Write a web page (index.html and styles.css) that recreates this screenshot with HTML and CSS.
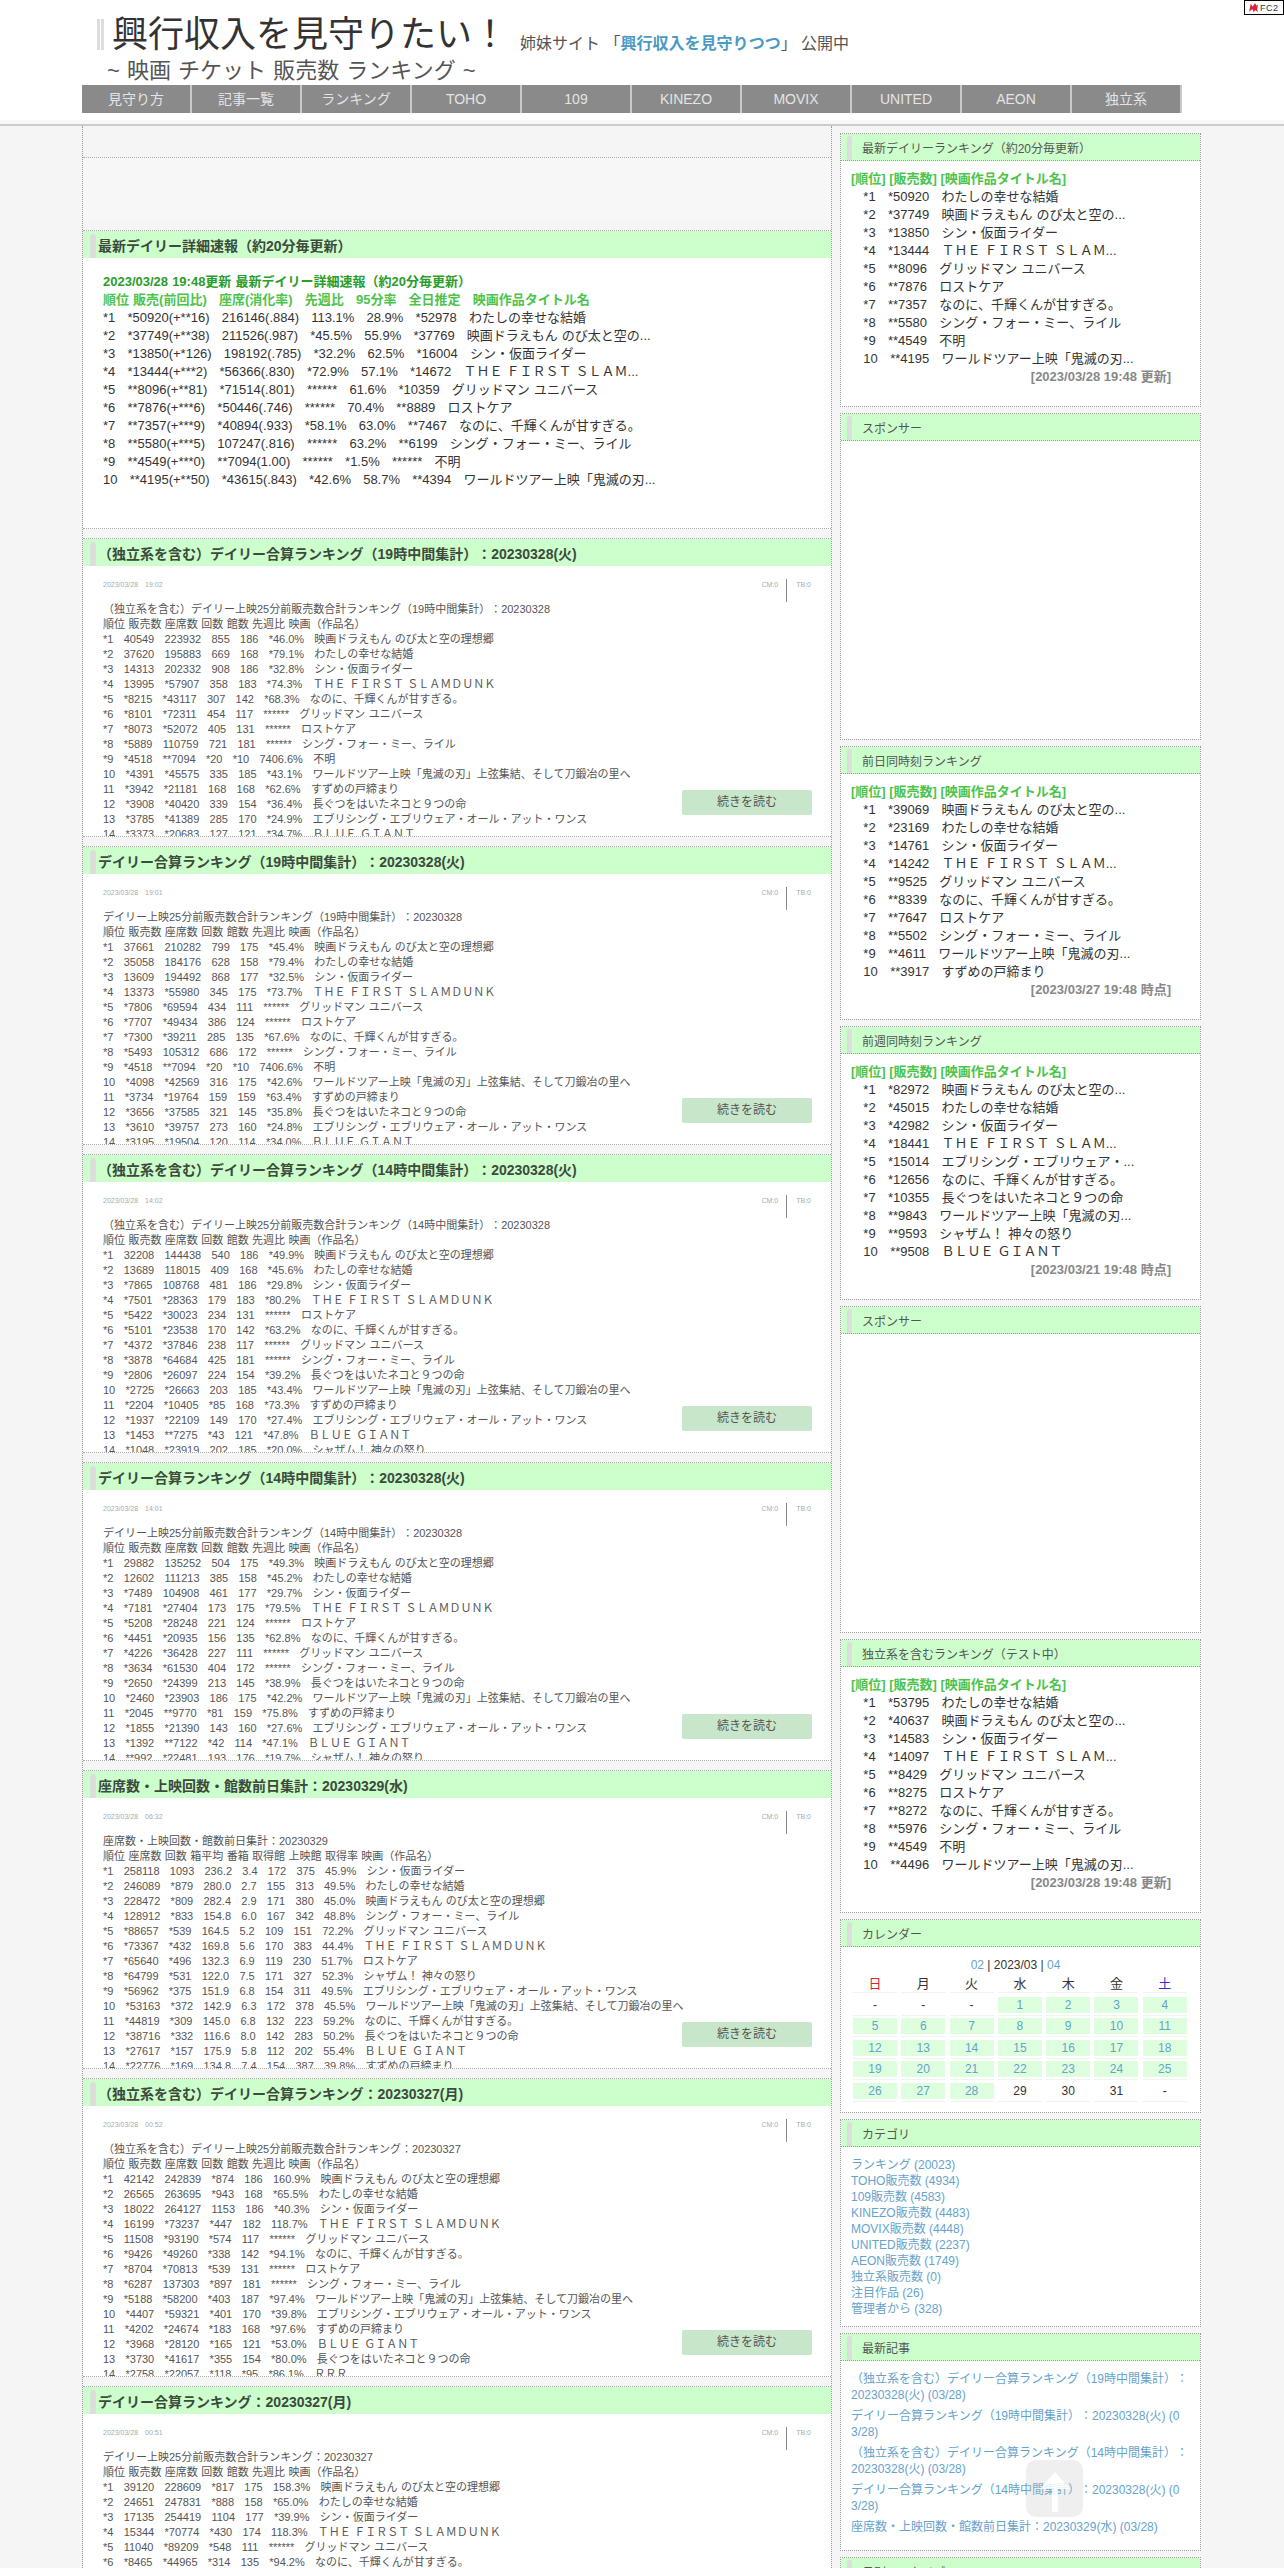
FILE: index.html
```html
<!DOCTYPE html>
<html lang="ja">
<head>
<meta charset="utf-8">
<title>興行収入を見守りたい！</title>
<link rel="stylesheet" href="styles.css">
</head>
<body>
<a class="fc2" href="#"><svg class="fc2-icon" viewBox="0 0 12 12" width="11" height="11"><path d="M1 11 L3 2 L5 5 L8 1 L9 4 L11 3 L10 8 L11 11 L8 9 L6 11 L5 8 L3 9 Z" fill="#d9263c"/></svg><span>FC2</span></a>
<header class="site-head">
  <div class="title-row">
    <span class="title-bar"></span>
    <h1 class="site-title">興行収入を見守りたい！</h1>
    <p class="sister">姉妹サイト 「<a class="sister-link" href="#">興行収入を見守りつつ</a>」 公開中</p>
  </div>
  <p class="site-sub">~ 映画 チケット 販売数 ランキング ~</p>
  <nav class="nav">
    <a href="#">見守り方</a><a href="#">記事一覧</a><a href="#">ランキング</a><a href="#">TOHO</a><a href="#">109</a><a href="#">KINEZO</a><a href="#">MOVIX</a><a href="#">UNITED</a><a href="#">AEON</a><a href="#">独立系</a>
  </nav>
</header>
<div class="band"></div>
<div class="layout">
<main class="main">
  <div class="ad-top"></div>

  <article class="entry">
    <h2 class="entry-head">最新デイリー詳細速報（約20分毎更新）</h2>
    <pre class="detail"><b class="hl-dark">2023/03/28 19:48更新 最新デイリー詳細速報（約20分毎更新）</b>
<b class="hl">順位 販売(前回比)   座席(消化率)   先週比   95分率   全日推定   映画作品タイトル名</b>
*1   *50920(+**16)   216146(.884)   113.1%   28.9%   *52978   わたしの幸せな結婚
*2   *37749(+**38)   211526(.987)   *45.5%   55.9%   *37769   映画ドラえもん のび太と空の...
*3   *13850(+*126)   198192(.785)   *32.2%   62.5%   *16004   シン・仮面ライダー
*4   *13444(+***2)   *56366(.830)   *72.9%   57.1%   *14672   ＴＨＥ ＦＩＲＳＴ ＳＬＡＭ...
*5   **8096(+**81)   *71514(.801)   ******   61.6%   *10359   グリッドマン ユニバース
*6   **7876(+***6)   *50446(.746)   ******   70.4%   **8889   ロストケア
*7   **7357(+***9)   *40894(.933)   *58.1%   63.0%   **7467   なのに、千輝くんが甘すぎる。
*8   **5580(+***5)   107247(.816)   ******   63.2%   **6199   シング・フォー・ミー、ライル
*9   **4549(+***0)   **7094(1.00)   ******   *1.5%   ******   不明
10   **4195(+**50)   *43615(.843)   *42.6%   58.7%   **4394   ワールドツアー上映「鬼滅の刃...</pre>
  </article>

  <article class="entry">
    <h2 class="entry-head">（独立系を含む）デイリー合算ランキング（19時中間集計）：20230328(火)</h2>
    <div class="entry-meta"><span>2023/03/28　19:02</span><span class="meta-right"><span class="meta-cm">CM:0</span><span>TB:0</span></span></div>
    <pre class="rank">（独立系を含む）デイリー上映25分前販売数合計ランキング（19時中間集計）：20230328
順位 販売数 座席数 回数 館数 先週比 映画（作品名）
*1   40549   223932   855   186   *46.0%   映画ドラえもん のび太と空の理想郷
*2   37620   195883   669   168   *79.1%   わたしの幸せな結婚
*3   14313   202332   908   186   *32.8%   シン・仮面ライダー
*4   13995   *57907   358   183   *74.3%   ＴＨＥ ＦＩＲＳＴ ＳＬＡＭＤＵＮＫ
*5   *8215   *43117   307   142   *68.3%   なのに、千輝くんが甘すぎる。
*6   *8101   *72311   454   117   ******   グリッドマン ユニバース
*7   *8073   *52072   405   131   ******   ロストケア
*8   *5889   110759   721   181   ******   シング・フォー・ミー、ライル
*9   *4518   **7094   *20   *10   7406.6%   不明
10   *4391   *45575   335   185   *43.1%   ワールドツアー上映「鬼滅の刃」上弦集結、そして刀鍛冶の里へ
11   *3942   *21181   168   168   *62.6%   すずめの戸締まり
12   *3908   *40420   339   154   *36.4%   長ぐつをはいたネコと９つの命
13   *3785   *41389   285   170   *24.9%   エブリシング・エブリウェア・オール・アット・ワンス
14   *3373   *20683   127   121   *34.7%   ＢＬＵＥ ＧＩＡＮＴ</pre>
    <a class="more" href="#">続きを読む</a>
  </article>

  <article class="entry">
    <h2 class="entry-head">デイリー合算ランキング（19時中間集計）：20230328(火)</h2>
    <div class="entry-meta"><span>2023/03/28　19:01</span><span class="meta-right"><span class="meta-cm">CM:0</span><span>TB:0</span></span></div>
    <pre class="rank">デイリー上映25分前販売数合計ランキング（19時中間集計）：20230328
順位 販売数 座席数 回数 館数 先週比 映画（作品名）
*1   37661   210282   799   175   *45.4%   映画ドラえもん のび太と空の理想郷
*2   35058   184176   628   158   *79.4%   わたしの幸せな結婚
*3   13609   194492   868   177   *32.5%   シン・仮面ライダー
*4   13373   *55980   345   175   *73.7%   ＴＨＥ ＦＩＲＳＴ ＳＬＡＭＤＵＮＫ
*5   *7806   *69594   434   111   ******   グリッドマン ユニバース
*6   *7707   *49434   386   124   ******   ロストケア
*7   *7300   *39211   285   135   *67.6%   なのに、千輝くんが甘すぎる。
*8   *5493   105312   686   172   ******   シング・フォー・ミー、ライル
*9   *4518   **7094   *20   *10   7406.6%   不明
10   *4098   *42569   316   175   *42.6%   ワールドツアー上映「鬼滅の刃」上弦集結、そして刀鍛冶の里へ
11   *3734   *19764   159   159   *63.4%   すずめの戸締まり
12   *3656   *37585   321   145   *35.8%   長ぐつをはいたネコと９つの命
13   *3610   *39757   273   160   *24.8%   エブリシング・エブリウェア・オール・アット・ワンス
14   *3195   *19504   120   114   *34.0%   ＢＬＵＥ ＧＩＡＮＴ</pre>
    <a class="more" href="#">続きを読む</a>
  </article>

  <article class="entry">
    <h2 class="entry-head">（独立系を含む）デイリー合算ランキング（14時中間集計）：20230328(火)</h2>
    <div class="entry-meta"><span>2023/03/28　14:02</span><span class="meta-right"><span class="meta-cm">CM:0</span><span>TB:0</span></span></div>
    <pre class="rank">（独立系を含む）デイリー上映25分前販売数合計ランキング（14時中間集計）：20230328
順位 販売数 座席数 回数 館数 先週比 映画（作品名）
*1   32208   144438   540   186   *49.9%   映画ドラえもん のび太と空の理想郷
*2   13689   118015   409   168   *45.6%   わたしの幸せな結婚
*3   *7865   108768   481   186   *29.8%   シン・仮面ライダー
*4   *7501   *28363   179   183   *80.2%   ＴＨＥ ＦＩＲＳＴ ＳＬＡＭＤＵＮＫ
*5   *5422   *30023   234   131   ******   ロストケア
*6   *5101   *23538   170   142   *63.2%   なのに、千輝くんが甘すぎる。
*7   *4372   *37846   238   117   ******   グリッドマン ユニバース
*8   *3878   *64684   425   181   ******   シング・フォー・ミー、ライル
*9   *2806   *26097   224   154   *39.2%   長ぐつをはいたネコと９つの命
10   *2725   *26663   203   185   *43.4%   ワールドツアー上映「鬼滅の刃」上弦集結、そして刀鍛冶の里へ
11   *2204   *10405   *85   168   *73.3%   すずめの戸締まり
12   *1937   *22109   149   170   *27.4%   エブリシング・エブリウェア・オール・アット・ワンス
13   *1453   **7275   *43   121   *47.8%   ＢＬＵＥ ＧＩＡＮＴ
14   *1048   *23919   202   185   *20.0%   シャザム！ 神々の怒り</pre>
    <a class="more" href="#">続きを読む</a>
  </article>

  <article class="entry">
    <h2 class="entry-head">デイリー合算ランキング（14時中間集計）：20230328(火)</h2>
    <div class="entry-meta"><span>2023/03/28　14:01</span><span class="meta-right"><span class="meta-cm">CM:0</span><span>TB:0</span></span></div>
    <pre class="rank">デイリー上映25分前販売数合計ランキング（14時中間集計）：20230328
順位 販売数 座席数 回数 館数 先週比 映画（作品名）
*1   29882   135252   504   175   *49.3%   映画ドラえもん のび太と空の理想郷
*2   12602   111213   385   158   *45.2%   わたしの幸せな結婚
*3   *7489   104908   461   177   *29.7%   シン・仮面ライダー
*4   *7181   *27404   173   175   *79.5%   ＴＨＥ ＦＩＲＳＴ ＳＬＡＭＤＵＮＫ
*5   *5208   *28248   221   124   ******   ロストケア
*6   *4451   *20935   156   135   *62.8%   なのに、千輝くんが甘すぎる。
*7   *4226   *36428   227   111   ******   グリッドマン ユニバース
*8   *3634   *61530   404   172   ******   シング・フォー・ミー、ライル
*9   *2650   *24399   213   145   *38.9%   長ぐつをはいたネコと９つの命
10   *2460   *23903   186   175   *42.2%   ワールドツアー上映「鬼滅の刃」上弦集結、そして刀鍛冶の里へ
11   *2045   **9770   *81   159   *75.8%   すずめの戸締まり
12   *1855   *21390   143   160   *27.6%   エブリシング・エブリウェア・オール・アット・ワンス
13   *1392   **7122   *42   114   *47.1%   ＢＬＵＥ ＧＩＡＮＴ
14   **992   *22481   193   176   *19.7%   シャザム！ 神々の怒り</pre>
    <a class="more" href="#">続きを読む</a>
  </article>

  <article class="entry">
    <h2 class="entry-head">座席数・上映回数・館数前日集計：20230329(水)</h2>
    <div class="entry-meta"><span>2023/03/28　06:32</span><span class="meta-right"><span class="meta-cm">CM:0</span><span>TB:0</span></span></div>
    <pre class="rank">座席数・上映回数・館数前日集計：20230329
順位 座席数 回数 箱平均 番箱 取得館 上映館 取得率 映画（作品名）
*1   258118   1093   236.2   3.4   172   375   45.9%   シン・仮面ライダー
*2   246089   *879   280.0   2.7   155   313   49.5%   わたしの幸せな結婚
*3   228472   *809   282.4   2.9   171   380   45.0%   映画ドラえもん のび太と空の理想郷
*4   128912   *833   154.8   6.0   167   342   48.8%   シング・フォー・ミー、ライル
*5   *88657   *539   164.5   5.2   109   151   72.2%   グリッドマン ユニバース
*6   *73367   *432   169.8   5.6   170   383   44.4%   ＴＨＥ ＦＩＲＳＴ ＳＬＡＭＤＵＮＫ
*7   *65640   *496   132.3   6.9   119   230   51.7%   ロストケア
*8   *64799   *531   122.0   7.5   171   327   52.3%   シャザム！ 神々の怒り
*9   *56962   *375   151.9   6.8   154   311   49.5%   エブリシング・エブリウェア・オール・アット・ワンス
10   *53163   *372   142.9   6.3   172   378   45.5%   ワールドツアー上映「鬼滅の刃」上弦集結、そして刀鍛冶の里へ
11   *44819   *309   145.0   6.8   132   223   59.2%   なのに、千輝くんが甘すぎる。
12   *38716   *332   116.6   8.0   142   283   50.2%   長ぐつをはいたネコと９つの命
13   *27617   *157   175.9   5.8   112   202   55.4%   ＢＬＵＥ ＧＩＡＮＴ
14   *22776   *169   134.8   7.4   154   387   39.8%   すずめの戸締まり</pre>
    <a class="more" href="#">続きを読む</a>
  </article>

  <article class="entry">
    <h2 class="entry-head">（独立系を含む）デイリー合算ランキング：20230327(月)</h2>
    <div class="entry-meta"><span>2023/03/28　00:52</span><span class="meta-right"><span class="meta-cm">CM:0</span><span>TB:0</span></span></div>
    <pre class="rank">（独立系を含む）デイリー上映25分前販売数合計ランキング：20230327
順位 販売数 座席数 回数 館数 先週比 映画（作品名）
*1   42142   242839   *874   186   160.9%   映画ドラえもん のび太と空の理想郷
*2   26565   263695   *943   168   *65.5%   わたしの幸せな結婚
*3   18022   264127   1153   186   *40.3%   シン・仮面ライダー
*4   16199   *73237   *447   182   118.7%   ＴＨＥ ＦＩＲＳＴ ＳＬＡＭＤＵＮＫ
*5   11508   *93190   *574   117   ******   グリッドマン ユニバース
*6   *9426   *49260   *338   142   *94.1%   なのに、千輝くんが甘すぎる。
*7   *8704   *70813   *539   131   ******   ロストケア
*8   *6287   137303   *897   181   ******   シング・フォー・ミー、ライル
*9   *5188   *58200   *403   187   *97.4%   ワールドツアー上映「鬼滅の刃」上弦集結、そして刀鍛冶の里へ
10   *4407   *59321   *401   170   *39.8%   エブリシング・エブリウェア・オール・アット・ワンス
11   *4202   *24674   *183   168   *97.6%   すずめの戸締まり
12   *3968   *28120   *165   121   *53.0%   ＢＬＵＥ ＧＩＡＮＴ
13   *3730   *41617   *355   154   *80.0%   長ぐつをはいたネコと９つの命
14   *2758   *22057   *118   *95   *86.1%   ＲＲＲ</pre>
    <a class="more" href="#">続きを読む</a>
  </article>

  <article class="entry">
    <h2 class="entry-head">デイリー合算ランキング：20230327(月)</h2>
    <div class="entry-meta"><span>2023/03/28　00:51</span><span class="meta-right"><span class="meta-cm">CM:0</span><span>TB:0</span></span></div>
    <pre class="rank">デイリー上映25分前販売数合計ランキング：20230327
順位 販売数 座席数 回数 館数 先週比 映画（作品名）
*1   39120   228609   *817   175   158.3%   映画ドラえもん のび太と空の理想郷
*2   24651   247831   *888   158   *65.0%   わたしの幸せな結婚
*3   17135   254419   1104   177   *39.9%   シン・仮面ライダー
*4   15344   *70774   *430   174   118.3%   ＴＨＥ ＦＩＲＳＴ ＳＬＡＭＤＵＮＫ
*5   11040   *89209   *548   111   ******   グリッドマン ユニバース
*6   *8465   *44965   *314   135   *94.2%   なのに、千輝くんが甘すぎる。</pre>
  </article>
</main>

<aside class="side">
  <section class="box box-rank">
    <h3 class="box-head">最新デイリーランキング（約20分毎更新）</h3>
    <div class="box-body">
      <p class="rank-head">[順位] [販売数] [映画作品タイトル名]</p>
      <pre class="side-rows">   *1   *50920   わたしの幸せな結婚
   *2   *37749   映画ドラえもん のび太と空の...
   *3   *13850   シン・仮面ライダー
   *4   *13444   ＴＨＥ ＦＩＲＳＴ ＳＬＡＭ...
   *5   **8096   グリッドマン ユニバース
   *6   **7876   ロストケア
   *7   **7357   なのに、千輝くんが甘すぎる。
   *8   **5580   シング・フォー・ミー、ライル
   *9   **4549   不明
   10   **4195   ワールドツアー上映「鬼滅の刃...</pre>
      <p class="rank-date">[2023/03/28 19:48 更新]</p>
    </div>
  </section>

  <section class="box box-sponsor">
    <h3 class="box-head">スポンサー</h3>
  </section>

  <section class="box box-rank">
    <h3 class="box-head">前日同時刻ランキング</h3>
    <div class="box-body">
      <p class="rank-head">[順位] [販売数] [映画作品タイトル名]</p>
      <pre class="side-rows">   *1   *39069   映画ドラえもん のび太と空の...
   *2   *23169   わたしの幸せな結婚
   *3   *14761   シン・仮面ライダー
   *4   *14242   ＴＨＥ ＦＩＲＳＴ ＳＬＡＭ...
   *5   **9525   グリッドマン ユニバース
   *6   **8339   なのに、千輝くんが甘すぎる。
   *7   **7647   ロストケア
   *8   **5502   シング・フォー・ミー、ライル
   *9   **4611   ワールドツアー上映「鬼滅の刃...
   10   **3917   すずめの戸締まり</pre>
      <p class="rank-date">[2023/03/27 19:48 時点]</p>
    </div>
  </section>

  <section class="box box-rank">
    <h3 class="box-head">前週同時刻ランキング</h3>
    <div class="box-body">
      <p class="rank-head">[順位] [販売数] [映画作品タイトル名]</p>
      <pre class="side-rows">   *1   *82972   映画ドラえもん のび太と空の...
   *2   *45015   わたしの幸せな結婚
   *3   *42982   シン・仮面ライダー
   *4   *18441   ＴＨＥ ＦＩＲＳＴ ＳＬＡＭ...
   *5   *15014   エブリシング・エブリウェア・...
   *6   *12656   なのに、千輝くんが甘すぎる。
   *7   *10355   長ぐつをはいたネコと９つの命
   *8   **9843   ワールドツアー上映「鬼滅の刃...
   *9   **9593   シャザム！ 神々の怒り
   10   **9508   ＢＬＵＥ ＧＩＡＮＴ</pre>
      <p class="rank-date">[2023/03/21 19:48 時点]</p>
    </div>
  </section>

  <section class="box box-sponsor">
    <h3 class="box-head">スポンサー</h3>
  </section>

  <section class="box box-rank">
    <h3 class="box-head">独立系を含むランキング（テスト中）</h3>
    <div class="box-body">
      <p class="rank-head">[順位] [販売数] [映画作品タイトル名]</p>
      <pre class="side-rows">   *1   *53795   わたしの幸せな結婚
   *2   *40637   映画ドラえもん のび太と空の...
   *3   *14583   シン・仮面ライダー
   *4   *14097   ＴＨＥ ＦＩＲＳＴ ＳＬＡＭ...
   *5   **8429   グリッドマン ユニバース
   *6   **8275   ロストケア
   *7   **8272   なのに、千輝くんが甘すぎる。
   *8   **5976   シング・フォー・ミー、ライル
   *9   **4549   不明
   10   **4496   ワールドツアー上映「鬼滅の刃...</pre>
      <p class="rank-date">[2023/03/28 19:48 更新]</p>
    </div>
  </section>

  <section class="box box-cal">
    <h3 class="box-head">カレンダー</h3>
    <div class="box-body box-body-roomy">
      <p class="cal-title"><a href="#">02</a> | 2023/03 | <a href="#">04</a></p>
      <div class="cal">
        <span class="wd sun">日</span><span class="wd">月</span><span class="wd">火</span><span class="wd">水</span><span class="wd">木</span><span class="wd">金</span><span class="wd sat">土</span>
        <span class="day">-</span><span class="day">-</span><span class="day">-</span><span class="day"><a href="#">1</a></span><span class="day"><a href="#">2</a></span><span class="day"><a href="#">3</a></span><span class="day"><a href="#">4</a></span>
        <span class="day"><a href="#">5</a></span><span class="day"><a href="#">6</a></span><span class="day"><a href="#">7</a></span><span class="day"><a href="#">8</a></span><span class="day"><a href="#">9</a></span><span class="day"><a href="#">10</a></span><span class="day"><a href="#">11</a></span>
        <span class="day"><a href="#">12</a></span><span class="day"><a href="#">13</a></span><span class="day"><a href="#">14</a></span><span class="day"><a href="#">15</a></span><span class="day"><a href="#">16</a></span><span class="day"><a href="#">17</a></span><span class="day"><a href="#">18</a></span>
        <span class="day"><a href="#">19</a></span><span class="day"><a href="#">20</a></span><span class="day"><a href="#">21</a></span><span class="day"><a href="#">22</a></span><span class="day"><a href="#">23</a></span><span class="day"><a href="#">24</a></span><span class="day"><a href="#">25</a></span>
        <span class="day"><a href="#">26</a></span><span class="day"><a href="#">27</a></span><span class="day"><a href="#">28</a></span><span class="day">29</span><span class="day">30</span><span class="day">31</span><span class="day">-</span>
      </div>
    </div>
  </section>

  <section class="box box-cat">
    <h3 class="box-head">カテゴリ</h3>
    <div class="box-body box-body-roomy links">
      <a href="#">ランキング (20023)</a>
      <a href="#">TOHO販売数 (4934)</a>
      <a href="#">109販売数 (4583)</a>
      <a href="#">KINEZO販売数 (4483)</a>
      <a href="#">MOVIX販売数 (4448)</a>
      <a href="#">UNITED販売数 (2237)</a>
      <a href="#">AEON販売数 (1749)</a>
      <a href="#">独立系販売数 (0)</a>
      <a href="#">注目作品 (26)</a>
      <a href="#">管理者から (328)</a>
    </div>
  </section>

  <section class="box box-recent">
    <h3 class="box-head">最新記事</h3>
    <div class="box-body box-body-roomy links recent">
      <a href="#">（独立系を含む）デイリー合算ランキング（19時中間集計）：20230328(火) (03/28)</a>
      <a href="#">デイリー合算ランキング（19時中間集計）：20230328(火) (0<br>3/28)</a>
      <a href="#">（独立系を含む）デイリー合算ランキング（14時中間集計）：20230328(火) (03/28)</a>
      <a href="#">デイリー合算ランキング（14時中間集計）：20230328(火) (0<br>3/28)</a>
      <a href="#">座席数・上映回数・館数前日集計：20230329(水) (03/28)</a>
    </div>
  </section>

  <section class="box">
    <h3 class="box-head">月別アーカイブ</h3>
  </section>
</aside>
</div>
<a class="to-top" href="#"><svg viewBox="0 0 57 57" width="57" height="57"><path d="M29 12 L44 29 L32 29 L32 52 L26 52 L26 29 L14 29 Z" fill="#ffffff"/></svg></a>
</body>
</html>
```
FILE: styles.css
```css
* { box-sizing: border-box; }
html, body { margin: 0; height: 2568px; overflow: hidden; }
body {
  position: relative;
  background: #f5f5f5;
  color: #333;
  font-family: "Liberation Sans", "Noto Sans CJK JP", sans-serif;
  font-size: 12px;
  text-spacing-trim: space-all;
  font-feature-settings: "chws" 0;
}
a { color: #66a3cc; text-decoration: none; }
h1, h2, h3, p, pre { margin: 0; font-family: inherit; }

.fc2 {
  position: absolute; top: 0; right: 0;
  width: 40px; height: 15px;
  display: flex; align-items: center; gap: 1px; padding-left: 3px;
  background: #fff; border: 1px solid #000;
  color: #333; font-size: 9px; letter-spacing: .5px;
}
.fc2-icon { flex: none; }

.site-head { background: #fff; height: 120px; padding: 15px 0 0 82px; }
.title-row { display: flex; align-items: flex-end; height: 40px; padding-left: 15px; }
.title-bar {
  align-self: flex-start; margin: 4px 8px 0 0;
  width: 7px; height: 31px;
  border-left: 3px solid #ddd; border-right: 3px solid #ddd;
}
.site-title { font-size: 36px; line-height: 40px; font-weight: 400; color: #333; }
.sister { margin-left: 12px; font-size: 16px; line-height: 22px; color: #555; }
.sister-link { color: #4a9ac4; font-weight: 700; }
.site-sub { margin-top: 3px; padding-left: 25px; font-size: 22px; line-height: 26px; color: #555; word-spacing: 1px; }
.nav { display: flex; width: 1100px; height: 28px; margin-top: 1px; background: #8a8a8a; }
.nav a {
  width: 110px; line-height: 28px; text-align: center;
  color: #e4e4e4; font-size: 14px;
  border-right: 2px solid #c8c8c8;
}
.band { height: 6px; background: #f8f8f8; border-bottom: 2px solid #ccc; }

.layout { display: flex; padding-left: 82px; align-items: flex-start; }
.main {
  width: 750px; padding-top: 31px;
  border-left: 1px dotted #999; border-right: 1px dotted #999;
}
.ad-top { height: 63px; margin-bottom: 10px; background: #f7f7f7; border-top: 1px dotted #aaa; }

.entry {
  position: relative; height: 299px; margin-bottom: 9px; overflow: hidden;
  background: #fff;
  border-top: 1px dotted #aaa; border-bottom: 1px dotted #aaa;
}
.entry-head {
  display: flex; height: 27px; align-items: center;
  background: #ccffcc; color: #3c4a3c;
  font-size: 14px; font-weight: 700;
  white-space: nowrap;
}
.entry-head::before {
  content: ""; flex: none; align-self: flex-end;
  width: 6px; height: 24px; margin: 0 2px 0 7px;
  background: #ddd; border-radius: 3px 3px 0 0;
}
.detail { padding: 15px 0 0 20px; font-size: 13px; line-height: 18px; color: #333; word-spacing: .45px; }
.hl-dark { color: #2a9d2a; }
.hl { color: #4cc44c; }
.entry-meta {
  display: flex; justify-content: space-between;
  padding: 13px 20px 0; height: 36px;
  font-size: 7px; line-height: 12px; color: #aaa;
}
.meta-right { display: flex; }
.meta-cm { padding-right: 8px; margin-right: 9px; border-right: 1px solid #888; }
.rank { padding-left: 20px; font-size: 11px; line-height: 15px; color: #555; word-spacing: .36px; }
.more {
  position: absolute; right: 19px; bottom: 21px;
  width: 130px; height: 25px; line-height: 25px; text-align: center;
  background: #c8e6c9; color: #555; font-size: 12px; border-radius: 2px;
}

.side { width: 361px; margin-left: 8px; padding-top: 7px; }
.box {
  margin-bottom: 6px; background: #fff;
  border: 1px dotted #999;
}
.box-rank { height: 274px; }
.box-sponsor { height: 327px; }
.box-cal { height: 194px; }
.box-cat { height: 208px; }
.box-recent { height: 218px; }
.box-head {
  display: flex; height: 27px; align-items: center;
  background: #ccffcc; color: #555;
  font-size: 12px; font-weight: 400;
  border-bottom: 1px dotted #999;
}
.box-head::before {
  content: ""; flex: none; align-self: flex-end;
  width: 5px; height: 24px; margin: 0 10px 0 6px;
  background: #ddd; border-radius: 3px 3px 0 0;
}
.box-body { padding: 9px 10px 0; }
.box-body-roomy { padding-top: 10px; }
.rank-head { font-size: 13px; line-height: 18px; font-weight: 700; color: #4cc44c; }
.side-rows { font-size: 13px; line-height: 18px; color: #333; word-spacing: .5px; }
.rank-date { padding-right: 19px; text-align: right; font-size: 13px; line-height: 18px; font-weight: 700; color: #888; }

.cal-title { text-align: center; line-height: 16px; padding-right: 10px; margin-bottom: 3px; }
.cal {
  display: grid; grid-template-columns: repeat(7, 44px);
  column-gap: 4.3px; row-gap: 2.4px; margin-left: 2px;
  text-align: center; line-height: 16px;
}
.wd { height: 17px; margin-bottom: 1.6px; border-bottom: 1px solid #eef5ee; font-size: 13px; }
.sun { color: #e02030; }
.sat { color: #3333cc; }
.day { height: 19px; border-bottom: 1px solid #eef5ee; color: #333; }
.day a { display: block; height: 16px; background: #ddffdd; color: #66a3cc; }

.links a { display: block; line-height: 16px; }
.recent { width: 358px; word-break: break-all; }
.recent a { margin-bottom: 5px; }

.to-top {
  position: absolute; left: 1026px; top: 2460px;
  width: 57px; height: 57px; border-radius: 10px;
  background: rgba(190, 190, 190, .28);
  opacity: .85;
}
.to-top svg { display: block; }
```
